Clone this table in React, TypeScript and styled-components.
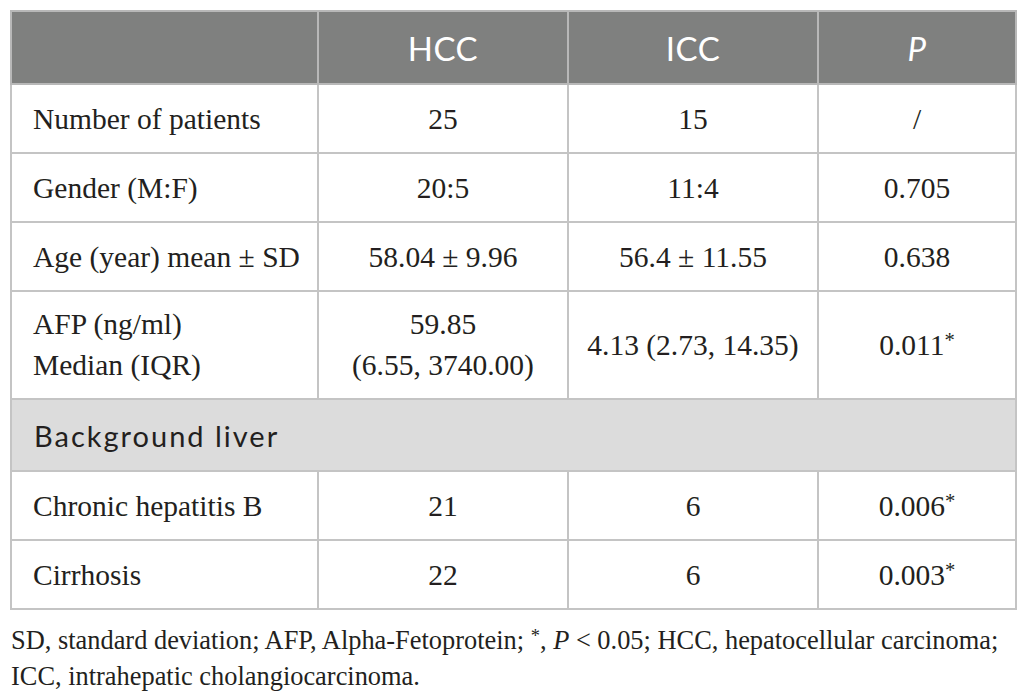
import React from 'react';
import styled, { createGlobalStyle } from 'styled-components';

const GlobalStyle = createGlobalStyle`
  html, body {
    margin: 0;
    padding: 0;
    background: #ffffff;
  }
`;

const Page = styled.main`
  padding: 10px 0 0 10px;
  width: 1006px;
`;

const Table = styled.table`
  width: 1006px;
  table-layout: fixed;
  border-collapse: collapse;
  border: 2px solid #c4c4c4;
`;

const HeadCell = styled.th`
  height: 73px;
  padding: 0;
  box-sizing: border-box;

  background-color: #7f807f;
  border: 2px solid #b8b8b8;

  color: #ffffff;
  font-family: Lato, 'Open Sans', sans-serif;
  font-size: 33px;
  font-weight: 400;
  letter-spacing: 0.5px;
  text-align: center;
  vertical-align: middle;

  em {
    font-style: italic;
  }
`;

const LabelCell = styled.td<{ $tall?: boolean }>`
  height: ${({ $tall }) => ($tall ? '108px' : '69px')};
  padding: ${({ $tall }) => ($tall ? '0 0 0 21px' : '2px 0 0 21px')};
  box-sizing: border-box;

  border: 2px solid #c4c4c4;

  color: #231f20;
  font-family: 'Liberation Serif', 'Times New Roman', serif;
  font-size: 29.5px;
  line-height: 41px;
  text-align: left;
  vertical-align: middle;
`;

const ValueCell = styled(LabelCell)`
  padding-left: 0;
  text-align: center;
`;

const SectionCell = styled.td`
  height: 72px;
  padding: 0 0 0 22px;
  box-sizing: border-box;

  background-color: #dcdcdc;
  border: 2px solid #c4c4c4;

  color: #231f20;
  font-family: Lato, 'Open Sans', sans-serif;
  font-size: 29px;
  font-weight: 400;
  letter-spacing: 2px;
  text-align: left;
  vertical-align: middle;
`;

const Star = styled.span`
  font-size: 0.7em;
  line-height: 1;
  vertical-align: 0.4em;
`;

const Footnote = styled.p`
  margin: 12px 0 0;
  padding: 0 0 0 1px;

  color: #231f20;
  font-family: 'Liberation Serif', 'Times New Roman', serif;
  font-size: 26.4px;
  line-height: 36px;
`;

interface Row {
  label: React.ReactNode;
  hcc: React.ReactNode;
  icc: React.ReactNode;
  p: React.ReactNode;
  tall?: boolean;
}

const topRows: Row[] = [
  { label: 'Number of patients', hcc: '25', icc: '15', p: '/' },
  { label: 'Gender (M:F)', hcc: '20:5', icc: '11:4', p: '0.705' },
  { label: 'Age (year) mean ± SD', hcc: '58.04 ± 9.96', icc: '56.4 ± 11.55', p: '0.638' },
  {
    label: (
      <>
        AFP (ng/ml)
        <br />
        Median (IQR)
      </>
    ),
    hcc: (
      <>
        59.85
        <br />
        (6.55, 3740.00)
      </>
    ),
    icc: '4.13 (2.73, 14.35)',
    p: (
      <>
        0.011<Star>*</Star>
      </>
    ),
    tall: true,
  },
];

const liverRows: Row[] = [
  {
    label: 'Chronic hepatitis B',
    hcc: '21',
    icc: '6',
    p: (
      <>
        0.006<Star>*</Star>
      </>
    ),
  },
  {
    label: 'Cirrhosis',
    hcc: '22',
    icc: '6',
    p: (
      <>
        0.003<Star>*</Star>
      </>
    ),
  },
];

function BodyRow({ row }: { row: Row }) {
  return (
    <tr>
      <LabelCell $tall={row.tall}>{row.label}</LabelCell>
      <ValueCell $tall={row.tall}>{row.hcc}</ValueCell>
      <ValueCell $tall={row.tall}>{row.icc}</ValueCell>
      <ValueCell $tall={row.tall}>{row.p}</ValueCell>
    </tr>
  );
}

export default function App() {
  return (
    <>
      <GlobalStyle />
      <Page>
        <Table>
          <colgroup>
            <col style={{ width: 307 }} />
            <col style={{ width: 250 }} />
            <col style={{ width: 250 }} />
            <col style={{ width: 198 }} />
          </colgroup>
          <thead>
            <tr>
              <HeadCell />
              <HeadCell>HCC</HeadCell>
              <HeadCell>ICC</HeadCell>
              <HeadCell>
                <em>P</em>
              </HeadCell>
            </tr>
          </thead>
          <tbody>
            {topRows.map((row, i) => (
              <BodyRow key={i} row={row} />
            ))}
            <tr>
              <SectionCell colSpan={4}>Background liver</SectionCell>
            </tr>
            {liverRows.map((row, i) => (
              <BodyRow key={i} row={row} />
            ))}
          </tbody>
        </Table>
        <Footnote>
          SD, standard deviation; AFP, Alpha-Fetoprotein; <Star>*</Star>, <em>P</em> &lt; 0.05; HCC,
          hepatocellular carcinoma; ICC, intrahepatic cholangiocarcinoma.
        </Footnote>
      </Page>
    </>
  );
}
